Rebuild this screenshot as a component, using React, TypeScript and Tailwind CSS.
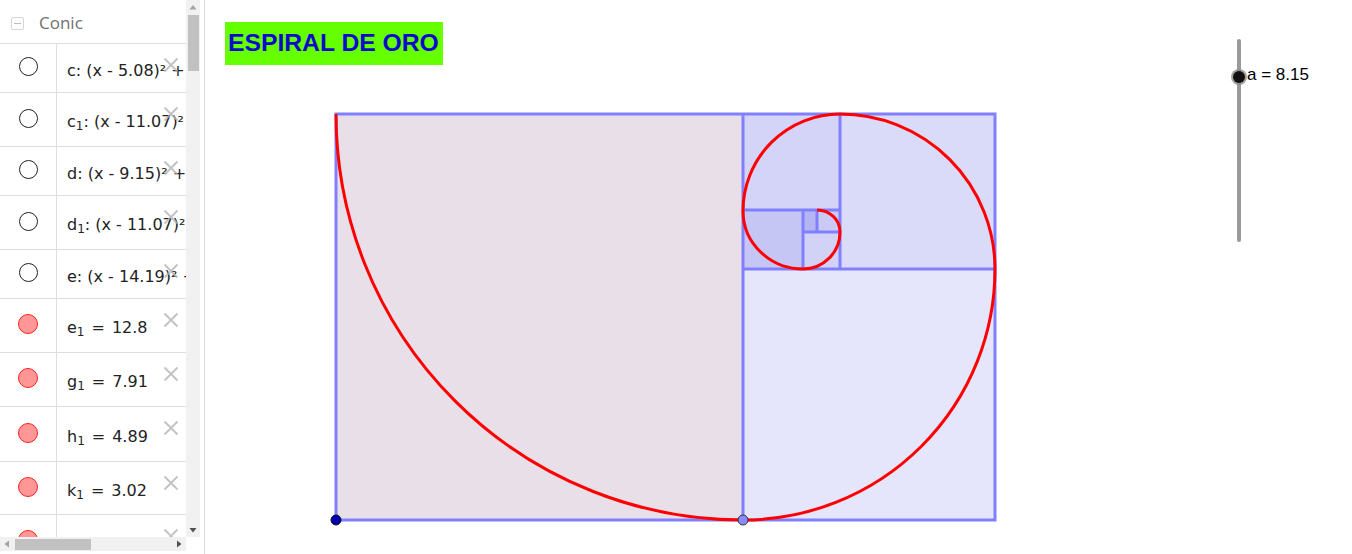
import React from "react";

type Row = {
  name: string;
  sub?: string;
  rest: string;
  filled: boolean;
  math?: boolean;
  h: string;
};

const rows: Row[] = [
  { name: "c", rest: ": (x - 5.08)² + (y - 6.13)² = 165.61", filled: false, h: "h-[49px]" },
  { name: "c", sub: "1", rest: ": (x - 11.07)² + (y - 6.13)² = 63.21", filled: false, h: "h-[54px]" },
  { name: "d", rest: ": (x - 9.15)² + (y - 6.13)² = 24.13", filled: false, h: "h-[49px]" },
  { name: "d", sub: "1", rest: ": (x - 11.07)² + (y - 9.24)² = 9.21", filled: false, h: "h-[54px]" },
  { name: "e", rest: ": (x - 14.19)² + (y - 9.24)² = 3.52", filled: false, h: "h-[49px]" },
  { name: "e", sub: "1", rest: "12.8", filled: true, math: true, h: "h-[54px]" },
  { name: "g", sub: "1", rest: "7.91", filled: true, math: true, h: "h-[54px]" },
  { name: "h", sub: "1", rest: "4.89", filled: true, math: true, h: "h-[55px]" },
  { name: "k", sub: "1", rest: "3.02", filled: true, math: true, h: "h-[53px]" },
  { name: "l", sub: "1", rest: "1.87", filled: true, math: true, h: "h-[54px]" },
];

function CloseIcon() {
  return (
    <svg width="16" height="16" viewBox="0 0 16 16" className="absolute right-[7px] top-[13px] opacity-80">
      <path d="M1.5 1.5 L14.5 14.5 M14.5 1.5 L1.5 14.5" stroke="#b4b4b4" strokeWidth="1.8" fill="none" />
    </svg>
  );
}

function AlgebraRow({ row }: { row: Row }) {
  return (
    <div className={`${row.h} flex border-b border-[#dedede] relative`}>
      <div className="w-[57px] shrink-0 border-r border-[#dedede] flex items-center justify-center pb-[3px]">
        {row.filled ? (
          <div className="w-[20px] h-[20px] rounded-full bg-[#ff9797] border border-[#ff2020]" />
        ) : (
          <div className="w-[19px] h-[19px] rounded-full bg-white border border-[#222]" />
        )}
      </div>
      <div
        className="flex-1 flex items-center pl-[10px] pt-[5px] whitespace-nowrap overflow-hidden text-[16px] text-[#222]"
        style={{ fontFamily: "'DejaVu Sans', 'Liberation Sans', sans-serif" }}
      >
        <span>{row.name}</span>
        {row.sub && <sub className="text-[12px] relative top-[4px]">{row.sub}</sub>}
        {row.math ? (
          <>
            <span className="mx-[7px]">=</span>
            <span>{row.rest}</span>
          </>
        ) : (
          <span>{row.rest}</span>
        )}
      </div>
      <CloseIcon />
    </div>
  );
}

function AlgebraPanel() {
  return (
    <div className="w-[205px] shrink-0 h-[554px] border-r border-[#dcdcdc] bg-white flex flex-col">
      <div className="w-[200px] h-[551px] flex flex-col">
        <div className="flex flex-1 min-h-0">
          <div className="w-[186px] overflow-hidden">
            <div className="h-[44px] flex items-center gap-[15px] pl-[11px] pt-[3px] border-b border-[#dedede]">
              <div className="w-[13px] h-[13px] border border-[#d6d6d6] rounded-[2px] flex items-center justify-center">
                <div className="w-[7px] h-px bg-[#bdbdbd]" />
              </div>
              <span className="text-[17px] text-[#707070]" style={{ fontFamily: "'Open Sans', sans-serif" }}>
                Conic
              </span>
            </div>
            {rows.map((r, i) => (
              <AlgebraRow key={i} row={r} />
            ))}
          </div>
          {/* vertical scrollbar */}
          <div className="w-[14px] bg-[#f1f1f1] flex flex-col items-center">
            <svg width="8" height="14" viewBox="0 0 8 14">
              <path d="M0.5 9.5 L4 5 L7.5 9.5 Z" fill="#a3a3a3" />
            </svg>
            <div className="w-[11px] h-[56px] bg-[#c1c1c1] mt-px" />
            <div className="flex-1" />
            <svg width="8" height="14" viewBox="0 0 8 14">
              <path d="M0.5 5 L4 9.5 L7.5 5 Z" fill="#505050" />
            </svg>
          </div>
        </div>
        {/* horizontal scrollbar */}
        <div className="h-[14px] w-[186px] bg-[#f1f1f1] flex items-center">
          <svg width="14" height="14" viewBox="0 0 14 14">
            <path d="M9 3.5 L4.5 7 L9 10.5 Z" fill="#a3a3a3" />
          </svg>
          <div className="w-[76px] h-[11px] bg-[#c1c1c1] ml-px" />
          <div className="flex-1" />
          <svg width="14" height="14" viewBox="0 0 14 14">
            <path d="M5 3.5 L9.5 7 L5 10.5 Z" fill="#505050" />
          </svg>
        </div>
      </div>
    </div>
  );
}

function GraphicsView() {
  const edge = "#8080ff";
  return (
    <div className="flex-1 h-[554px] bg-white overflow-hidden">
      <svg width="1147" height="554" viewBox="205 0 1147 554">
        {/* title */}
        <rect x="225" y="22" width="218" height="43" fill="#66ff00" />
        <text
          x="228"
          y="51"
          fontFamily="'Liberation Sans', Arial, sans-serif"
          fontWeight="bold"
          fontSize="24.7"
          fill="#0a0acc"
        >
          ESPIRAL DE ORO
        </text>

        {/* square fills */}
        <rect x="336" y="114" width="407" height="406" fill="#e9dfe9" />
        <rect x="743" y="269" width="252" height="251" fill="#e5e5fb" />
        <rect x="840" y="114" width="155" height="155" fill="#dadaf9" />
        <rect x="743" y="114" width="97" height="96" fill="#d4d4f8" />
        <rect x="743" y="210" width="60" height="59" fill="#c6c6f5" />
        <rect x="803" y="232" width="37" height="37" fill="#d2d2f7" />
        <rect x="803" y="210" width="14" height="22" fill="#b5b5f1" />
        <rect x="817" y="210" width="23" height="22" fill="#cacaf5" />

        {/* edges */}
        <g stroke={edge} strokeWidth="3" fill="none">
          <rect x="336" y="114" width="659" height="406" />
          <line x1="743" y1="114" x2="743" y2="520" />
          <line x1="743" y1="269" x2="995" y2="269" />
          <line x1="840" y1="114" x2="840" y2="269" />
          <line x1="743" y1="210" x2="840" y2="210" />
          <line x1="803" y1="210" x2="803" y2="269" />
          <line x1="803" y1="232" x2="840" y2="232" />
          <line x1="817" y1="210" x2="817" y2="232" />
        </g>

        {/* spiral */}
        <path
          d="M336 114 A407 406 0 0 0 743 520 A252 251 0 0 0 995 269 A155 155 0 0 0 840 114 A97 97 0 0 0 743 211 A60 58 0 0 0 803 269 A37 37 0 0 0 840 232 A23 22 0 0 0 817 210"
          stroke="#ff0000"
          strokeWidth="3"
          fill="none"
        />

        {/* points */}
        <circle cx="336" cy="520" r="5" fill="#0000b0" stroke="#111" strokeWidth="1" />
        <circle cx="743" cy="520" r="5" fill="#8a8aff" stroke="#333" strokeWidth="1" />

        {/* slider */}
        <line x1="1239" y1="41" x2="1239" y2="240" stroke="#9a9a9a" strokeWidth="4" strokeLinecap="round" />
        <circle cx="1239" cy="77" r="8" fill="#8c8c8c" opacity="0.8" />
        <circle cx="1239" cy="77" r="6" fill="#111" />
        <text x="1247" y="80" fontFamily="'Liberation Sans', Arial, sans-serif" fontSize="17" fill="#000">
          a = 8.15
        </text>
      </svg>
    </div>
  );
}

export default function App() {
  return (
    <div className="w-[1352px] h-[554px] flex bg-white overflow-hidden">
      <AlgebraPanel />
      <GraphicsView />
    </div>
  );
}
